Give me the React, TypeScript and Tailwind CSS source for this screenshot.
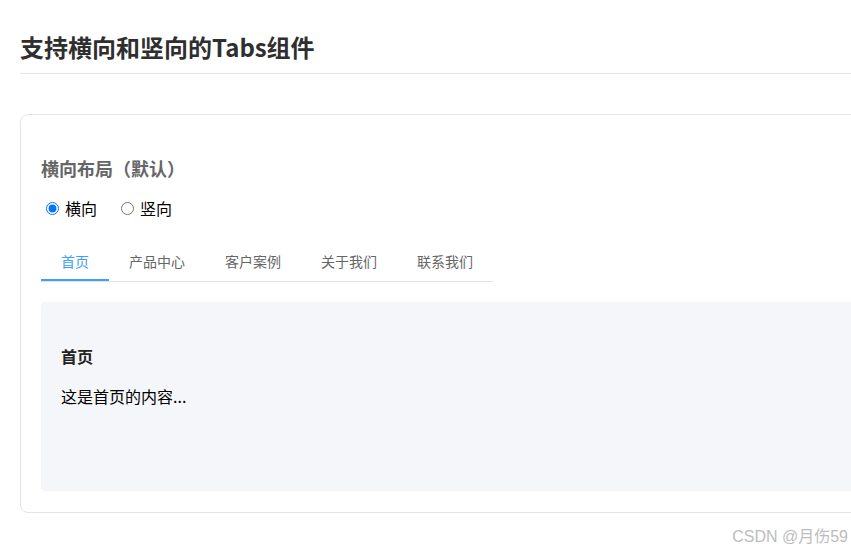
import { useState } from 'react'

const tabs = [
  { key: 'home', label: '首页', text: '这是首页的内容...' },
  { key: 'product', label: '产品中心', text: '这是产品中心的内容...' },
  { key: 'case', label: '客户案例', text: '这是客户案例的内容...' },
  { key: 'about', label: '关于我们', text: '这是关于我们的内容...' },
  { key: 'contact', label: '联系我们', text: '这是联系我们的内容...' },
]

export default function App() {
  const [mode, setMode] = useState<'h' | 'v'>('h')
  const [active, setActive] = useState('home')
  const current = tabs.find((t) => t.key === active)!

  return (
    <div className="relative h-[553px] w-full overflow-hidden bg-white font-['Noto_Sans_CJK_SC','Noto_Sans',sans-serif]">
      <div className="w-[920px] px-5 pt-[29px]">
        <h1 className="border-b border-[#e6e6ea] pb-2 text-2xl leading-9 font-bold text-[#2f2f2f]">
          支持横向和竖向的Tabs组件
        </h1>

        <section className="mt-10 h-[399px] rounded-lg border border-[#e4e4ec] px-5 pt-[40px]">
          <h2 className="text-lg leading-[27px] font-bold text-[#666]">横向布局（默认）</h2>

          <div className="mt-[14px] flex items-center text-base leading-6 text-black">
            <label className="mr-[19px] flex items-center">
              <input
                type="radio"
                name="mode"
                checked={mode === 'h'}
                onChange={() => setMode('h')}
                className="mr-[6px] ml-[5px] h-[13px] w-[13px]"
              />
              横向
            </label>
            <label className="flex items-center">
              <input
                type="radio"
                name="mode"
                checked={mode === 'v'}
                onChange={() => setMode('v')}
                className="mr-[6px] ml-[5px] h-[13px] w-[13px]"
              />
              竖向
            </label>
          </div>

          <div className="mt-[21px] flex w-[452px] border-b border-[#e4e4e7]">
            {tabs.map((t) => (
              <button
                key={t.key}
                onClick={() => setActive(t.key)}
                className={
                  t.key === active
                    ? 'border-b-2 border-[#409eff] px-5 pt-[10px] pb-[7px] text-sm leading-[21px] text-[#409eff]'
                    : 'border-b-2 border-transparent px-5 pt-[10px] pb-[7px] text-sm leading-[21px] text-[#666]'
                }
              >
                {t.label}
              </button>
            ))}
          </div>

          <div className="mt-[20px] h-[189px] rounded bg-[#f5f6f9] px-5 pt-[42px]">
            <h3 className="text-base leading-6 font-bold text-[#222]">{current.label}</h3>
            <p className="mt-4 text-base leading-6 text-black">{current.text}</p>
          </div>
        </section>
      </div>

      <div className="absolute right-[3px] bottom-[4px] font-['Liberation_Sans','Noto_Sans_CJK_SC',sans-serif] text-base text-[#bcbcbc]">
        CSDN @月伤59
      </div>
    </div>
  )
}
